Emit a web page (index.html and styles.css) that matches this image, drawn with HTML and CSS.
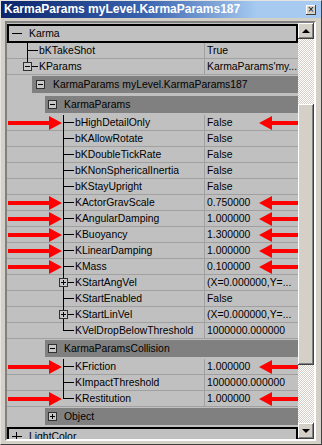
FILE: index.html
```html
<!DOCTYPE html>
<html lang="en">
<head>
  <meta charset="UTF-8" />
  <title>KarmaParams myLevel.KarmaParams187</title>
  <link rel="stylesheet" href="styles.css" />
</head>
<body>
  <div class="window">
    <div class="titlebar">
      <span class="title">KarmaParams myLevel.KarmaParams187</span>
      <span class="close">&#215;</span>
    </div>

    <div class="panel">
      <div class="list">
        <!-- root category -->
        <div class="cat"><span class="sign minus"></span><span>Karma</span></div>

        <div class="row">
          <div class="name lvl1"><span class="branch"></span><span>bKTakeShot</span></div>
          <div class="val">True</div>
        </div>
        <div class="row">
          <div class="name lvl1"><span class="branch last box minus"></span><span>KParams</span></div>
          <div class="val">KarmaParams'my...</div>
        </div>

        <div class="head h1"><div class="bar"><span class="hbox minus"></span><span>KarmaParams myLevel.KarmaParams187</span></div></div>
        <div class="head h2"><div class="bar"><span class="hbox minus"></span><span>KarmaParams</span></div></div>

        <div class="row">
          <div class="name lvl2"><span class="branch"></span><span>bHighDetailOnly</span></div>
          <div class="val">False</div>
          <svg class="arrow-l" width="54" height="16" viewBox="0 0 54 16"><rect x="0" y="6" width="44" height="4" fill="#f00"/><polygon points="41,1 54,8 41,15" fill="#f00"/></svg>
          <svg class="arrow-r" width="51" height="16" viewBox="0 0 51 16"><polygon points="0,8 13,1 13,15" fill="#f00"/><rect x="10" y="6" width="41" height="4" fill="#f00"/></svg>
        </div>
        <div class="row">
          <div class="name lvl2"><span class="branch"></span><span>bKAllowRotate</span></div>
          <div class="val">False</div>
        </div>
        <div class="row">
          <div class="name lvl2"><span class="branch"></span><span>bKDoubleTickRate</span></div>
          <div class="val">False</div>
        </div>
        <div class="row">
          <div class="name lvl2"><span class="branch"></span><span>bKNonSphericalInertia</span></div>
          <div class="val">False</div>
        </div>
        <div class="row">
          <div class="name lvl2"><span class="branch"></span><span>bKStayUpright</span></div>
          <div class="val">False</div>
        </div>
        <div class="row">
          <div class="name lvl2"><span class="branch"></span><span>KActorGravScale</span></div>
          <div class="val">0.750000</div>
          <svg class="arrow-l" width="54" height="16" viewBox="0 0 54 16"><rect x="0" y="6" width="44" height="4" fill="#f00"/><polygon points="41,1 54,8 41,15" fill="#f00"/></svg>
          <svg class="arrow-r" width="51" height="16" viewBox="0 0 51 16"><polygon points="0,8 13,1 13,15" fill="#f00"/><rect x="10" y="6" width="41" height="4" fill="#f00"/></svg>
        </div>
        <div class="row">
          <div class="name lvl2"><span class="branch"></span><span>KAngularDamping</span></div>
          <div class="val">1.000000</div>
          <svg class="arrow-l" width="54" height="16" viewBox="0 0 54 16"><rect x="0" y="6" width="44" height="4" fill="#f00"/><polygon points="41,1 54,8 41,15" fill="#f00"/></svg>
          <svg class="arrow-r" width="51" height="16" viewBox="0 0 51 16"><polygon points="0,8 13,1 13,15" fill="#f00"/><rect x="10" y="6" width="41" height="4" fill="#f00"/></svg>
        </div>
        <div class="row">
          <div class="name lvl2"><span class="branch"></span><span>KBuoyancy</span></div>
          <div class="val">1.300000</div>
          <svg class="arrow-l" width="54" height="16" viewBox="0 0 54 16"><rect x="0" y="6" width="44" height="4" fill="#f00"/><polygon points="41,1 54,8 41,15" fill="#f00"/></svg>
          <svg class="arrow-r" width="51" height="16" viewBox="0 0 51 16"><polygon points="0,8 13,1 13,15" fill="#f00"/><rect x="10" y="6" width="41" height="4" fill="#f00"/></svg>
        </div>
        <div class="row">
          <div class="name lvl2"><span class="branch"></span><span>KLinearDamping</span></div>
          <div class="val">1.000000</div>
          <svg class="arrow-l" width="54" height="16" viewBox="0 0 54 16"><rect x="0" y="6" width="44" height="4" fill="#f00"/><polygon points="41,1 54,8 41,15" fill="#f00"/></svg>
          <svg class="arrow-r" width="51" height="16" viewBox="0 0 51 16"><polygon points="0,8 13,1 13,15" fill="#f00"/><rect x="10" y="6" width="41" height="4" fill="#f00"/></svg>
        </div>
        <div class="row">
          <div class="name lvl2"><span class="branch"></span><span>KMass</span></div>
          <div class="val">0.100000</div>
          <svg class="arrow-l" width="54" height="16" viewBox="0 0 54 16"><rect x="0" y="6" width="44" height="4" fill="#f00"/><polygon points="41,1 54,8 41,15" fill="#f00"/></svg>
          <svg class="arrow-r" width="51" height="16" viewBox="0 0 51 16"><polygon points="0,8 13,1 13,15" fill="#f00"/><rect x="10" y="6" width="41" height="4" fill="#f00"/></svg>
        </div>
        <div class="row">
          <div class="name lvl2"><span class="branch box plus"></span><span>KStartAngVel</span></div>
          <div class="val">(X=0.000000,Y=...</div>
        </div>
        <div class="row">
          <div class="name lvl2"><span class="branch"></span><span>KStartEnabled</span></div>
          <div class="val">False</div>
        </div>
        <div class="row">
          <div class="name lvl2"><span class="branch box plus"></span><span>KStartLinVel</span></div>
          <div class="val">(X=0.000000,Y=...</div>
        </div>
        <div class="row">
          <div class="name lvl2"><span class="branch last"></span><span>KVelDropBelowThreshold</span></div>
          <div class="val">1000000.000000</div>
        </div>

        <div class="head h2"><div class="bar"><span class="hbox minus"></span><span>KarmaParamsCollision</span></div></div>

        <div class="row">
          <div class="name lvl2"><span class="branch"></span><span>KFriction</span></div>
          <div class="val">1.000000</div>
          <svg class="arrow-l" width="54" height="16" viewBox="0 0 54 16"><rect x="0" y="6" width="44" height="4" fill="#f00"/><polygon points="41,1 54,8 41,15" fill="#f00"/></svg>
          <svg class="arrow-r" width="51" height="16" viewBox="0 0 51 16"><polygon points="0,8 13,1 13,15" fill="#f00"/><rect x="10" y="6" width="41" height="4" fill="#f00"/></svg>
        </div>
        <div class="row">
          <div class="name lvl2"><span class="branch"></span><span>KImpactThreshold</span></div>
          <div class="val">1000000.000000</div>
        </div>
        <div class="row">
          <div class="name lvl2"><span class="branch last"></span><span>KRestitution</span></div>
          <div class="val">1.000000</div>
          <svg class="arrow-l" width="54" height="16" viewBox="0 0 54 16"><rect x="0" y="6" width="44" height="4" fill="#f00"/><polygon points="41,1 54,8 41,15" fill="#f00"/></svg>
          <svg class="arrow-r" width="51" height="16" viewBox="0 0 51 16"><polygon points="0,8 13,1 13,15" fill="#f00"/><rect x="10" y="6" width="41" height="4" fill="#f00"/></svg>
        </div>

        <div class="head h2"><div class="bar"><span class="hbox plus"></span><span>Object</span></div></div>

        <div class="cat"><span class="sign plus"></span><span>LightColor</span></div>
      </div>

      <!-- scrollbar -->
      <div class="sb">
        <div class="sb-btn"><span class="tri up"></span></div>
        <div class="sb-gap"></div>
        <div class="sb-thumb"></div>
        <div class="sb-rest"></div>
        <div class="sb-btn"><span class="tri down"></span></div>
      </div>
    </div>
  </div>
</body>
</html>
```

FILE: styles.css
```css
/* base */
body {
  margin: 0;
  background: #d4d0c8;
  font-family: "Liberation Sans", Arial, sans-serif;
  font-size: 10.4px;
  color: #000;
}

.window {
  width: 322px;
  height: 445px;
  box-sizing: border-box;
  border: 1px solid;
  border-color: #e6e4de #404040 #404040 #e6e4de;
  background: #d4d0c8;
  display: flex;
  flex-direction: column;
}

/* title bar */
.titlebar {
  height: 17px;
  flex: none;
  display: flex;
  align-items: center;
  justify-content: space-between;
  padding: 0 5px 0 3px;
  background: linear-gradient(to right, #0a246a 0%, #3a64b0 45%, #a6caf0 80%, #a6caf0 100%);
}

.title {
  color: #fff;
  font-weight: bold;
  font-size: 12px;
  line-height: 17px;
}

.close {
  width: 10px;
  height: 10px;
  background: #d4d0c8;
  box-shadow: inset -1px -1px #404040, inset 1px 1px #fff;
  font-size: 10px;
  line-height: 9px;
  text-align: center;
  color: #000;
}

/* sunken panel */
.panel {
  flex: 1;
  margin: 3px 5px 3px 4px;
  border: 2px solid;
  border-color: #808080 #fff #fff #808080;
  box-shadow: inset 1px 1px #404040;
  display: flex;
  overflow: hidden;
}

.list {
  width: 291px;
  flex: none;
  padding-top: 1px;
  background: #c0c0c0;
  overflow: hidden;
}

/* root categories */
.cat {
  height: 19px;
  box-sizing: border-box;
  border: 2px solid #000;
  display: flex;
  align-items: center;
  padding-left: 20px;
  position: relative;
  background: #c0c0c0;
}

.sign {
  position: absolute;
  left: 3px;
  top: 7px;
  width: 10px;
  height: 1px;
  background: #000;
}

.sign.plus::after {
  content: "";
  position: absolute;
  left: 4px;
  top: -4px;
  width: 1px;
  height: 9px;
  background: #000;
}

/* property rows */
.row {
  height: 16px;
  display: flex;
  position: relative;
  box-shadow: inset 0 -1px #a0a0a0;
  line-height: 15px;
  white-space: nowrap;
}

.name {
  width: 197px;
  flex: none;
  display: flex;
  box-sizing: border-box;
  overflow: hidden;
}

.name.lvl1 { padding-left: 20px; }
.name.lvl2 { padding-left: 56px; }

.name > span:last-child {
  margin-left: 1px;
}

.val {
  flex: 1;
  padding-left: 3px;
  box-shadow: inset 1px 0 #a0a0a0;
  height: 15px;
  overflow: hidden;
}

/* tree lines */
.branch {
  width: 11px;
  height: 16px;
  flex: none;
  position: relative;
  background:
    linear-gradient(#000, #000) 0 0 / 1px 100% no-repeat,
    linear-gradient(#000, #000) 0 7px / 100% 1px no-repeat;
}

.branch.last {
  background:
    linear-gradient(#000, #000) 0 0 / 1px 8px no-repeat,
    linear-gradient(#000, #000) 0 7px / 100% 1px no-repeat;
}

.branch.box::before,
.hbox {
  content: "";
  width: 7px;
  height: 7px;
  border: 1px solid #303030;
  background: #c8c8c8;
}

.branch.box::before {
  position: absolute;
  left: -4px;
  top: 3px;
}

.branch.box.minus::before,
.hbox.minus {
  background: linear-gradient(#000, #000) center / 5px 1px no-repeat, #c8c8c8;
}

.branch.box.plus::before,
.hbox.plus {
  background:
    linear-gradient(#000, #000) center / 5px 1px no-repeat,
    linear-gradient(#000, #000) center / 1px 5px no-repeat,
    #c8c8c8;
}

/* group headers */
.head {
  height: 20px;
  box-sizing: border-box;
  padding: 1px 0 2px;
}

.head.h1 { padding-left: 25px; }
.head.h2 { padding-left: 38px; }

.bar {
  height: 17px;
  background: #808080;
  display: flex;
  align-items: center;
  white-space: nowrap;
}

.h1 .hbox { margin: 0 8px 0 4px; }
.h2 .hbox { margin: 0 7px 0 3px; }

/* annotation arrows */
.arrow-l,
.arrow-r {
  position: absolute;
  top: 0;
}

.arrow-l { left: 1px; }
.arrow-r { left: 252px; z-index: 2; }

/* scrollbar */
.sb {
  width: 16px;
  flex: none;
  display: flex;
  flex-direction: column;
  background: repeating-conic-gradient(#fff 0 25%, #d4d0c8 0 50%) 0 0 / 2px 2px;
}

.sb-btn,
.sb-thumb {
  background: #d4d0c8;
  box-shadow: inset -1px -1px #404040, inset 1px 1px #fff, inset -2px -2px #808080;
}

.sb-btn {
  height: 16px;
  flex: none;
  display: flex;
  align-items: center;
  justify-content: center;
}

.sb-gap { height: 65px; flex: none; }
.sb-thumb { height: 261px; flex: none; }
.sb-rest { flex: 1; }

.tri {
  width: 0;
  height: 0;
  border-left: 4px solid transparent;
  border-right: 4px solid transparent;
}

.tri.up { border-bottom: 4px solid #000; }
.tri.down { border-top: 4px solid #000; }
```
